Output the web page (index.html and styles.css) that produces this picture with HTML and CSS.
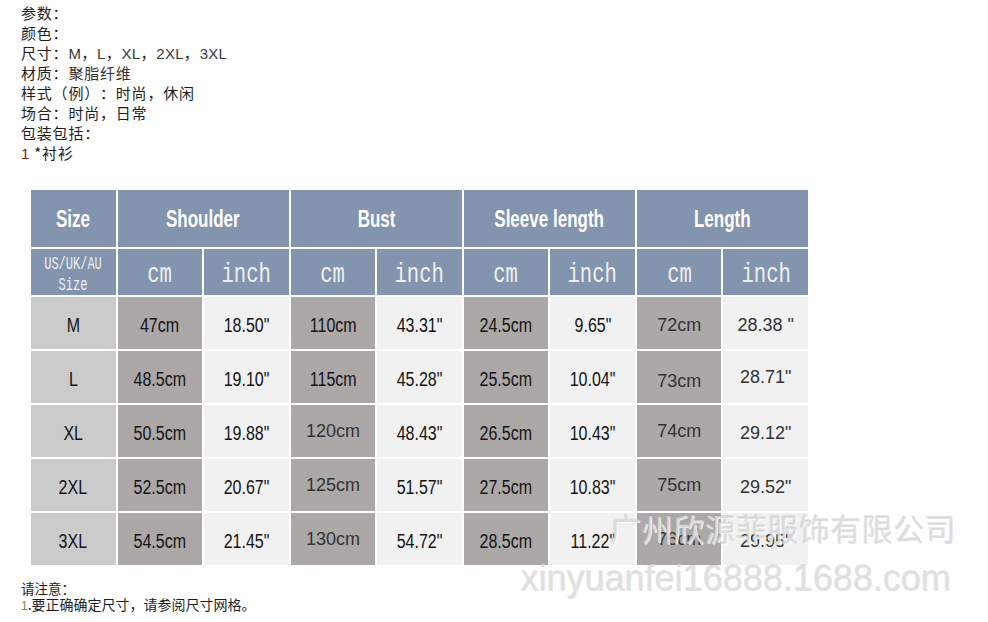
FILE: index.html
```html
<!DOCTYPE html>
<html lang="zh-CN">
<head>
<meta charset="utf-8">
<title>尺码表</title>
<link rel="stylesheet" href="styles.css">
</head>
<body>
<div class="page">
  <div class="params">
    <p>参数：</p>
    <p>颜色：</p>
    <p>尺寸：<span class="latin">M</span>，<span class="latin">L</span>，<span class="latin">XL</span>，<span class="latin">2XL</span>，<span class="latin">3XL</span></p>
    <p>材质：<span class="soft">聚脂纤维</span></p>
    <p>样式（例）：时尚，休闲</p>
    <p>场合：时尚，日常</p>
    <p>包装包括：</p>
    <p><span class="num-red">1</span> *衬衫</p>
  </div>

  <div class="table-wrap">
    <div class="size-table">
      <div class="c h1"><span class="hd">Size</span></div>
      <div class="c h1 span2"><span class="hd">Shoulder</span></div>
      <div class="c h1 span2"><span class="hd">Bust</span></div>
      <div class="c h1 span2"><span class="hd">Sleeve length</span></div>
      <div class="c h1 span2"><span class="hd">Length</span></div>

      <div class="c h2 region"><span class="mono small">US/UK/AU<br>Size</span></div>
      <div class="c h2"><span class="mono">cm</span></div>
      <div class="c h2"><span class="mono">inch</span></div>
      <div class="c h2"><span class="mono">cm</span></div>
      <div class="c h2"><span class="mono">inch</span></div>
      <div class="c h2"><span class="mono">cm</span></div>
      <div class="c h2"><span class="mono">inch</span></div>
      <div class="c h2"><span class="mono">cm</span></div>
      <div class="c h2"><span class="mono">inch</span></div>

      <div class="c sz"><span class="n">M</span></div>
      <div class="c cm"><span class="n">47cm</span></div>
      <div class="c in"><span class="n">18.50"</span></div>
      <div class="c cm"><span class="n">110cm</span></div>
      <div class="c in"><span class="n">43.31"</span></div>
      <div class="c cm"><span class="n">24.5cm</span></div>
      <div class="c in"><span class="n">9.65"</span></div>
      <div class="c cm"><span class="w">72cm</span></div>
      <div class="c in"><span class="w">28.38 "</span></div>

      <div class="c sz"><span class="n">L</span></div>
      <div class="c cm"><span class="n">48.5cm</span></div>
      <div class="c in"><span class="n">19.10"</span></div>
      <div class="c cm"><span class="n">115cm</span></div>
      <div class="c in"><span class="n">45.28"</span></div>
      <div class="c cm"><span class="n">25.5cm</span></div>
      <div class="c in"><span class="n">10.04"</span></div>
      <div class="c cm"><span class="w low">73cm</span></div>
      <div class="c in"><span class="w up">28.71"</span></div>

      <div class="c sz"><span class="n">XL</span></div>
      <div class="c cm"><span class="n">50.5cm</span></div>
      <div class="c in"><span class="n">19.88"</span></div>
      <div class="c cm"><span class="w up">120cm</span></div>
      <div class="c in"><span class="n">48.43"</span></div>
      <div class="c cm"><span class="n">26.5cm</span></div>
      <div class="c in"><span class="n">10.43"</span></div>
      <div class="c cm"><span class="w up">74cm</span></div>
      <div class="c in"><span class="w">29.12"</span></div>

      <div class="c sz"><span class="n">2XL</span></div>
      <div class="c cm"><span class="n">52.5cm</span></div>
      <div class="c in"><span class="n">20.67"</span></div>
      <div class="c cm"><span class="w up">125cm</span></div>
      <div class="c in"><span class="n">51.57"</span></div>
      <div class="c cm"><span class="n">27.5cm</span></div>
      <div class="c in"><span class="n">10.83"</span></div>
      <div class="c cm"><span class="w up">75cm</span></div>
      <div class="c in"><span class="w">29.52"</span></div>

      <div class="c sz"><span class="n">3XL</span></div>
      <div class="c cm"><span class="n">54.5cm</span></div>
      <div class="c in"><span class="n">21.45"</span></div>
      <div class="c cm"><span class="w up">130cm</span></div>
      <div class="c in"><span class="n">54.72"</span></div>
      <div class="c cm"><span class="n">28.5cm</span></div>
      <div class="c in"><span class="n">11.22"</span></div>
      <div class="c cm"><span class="w up">76cm</span></div>
      <div class="c in"><span class="w">29.95"</span></div>
    </div>
    <div class="watermark">
      <div class="wm-cn">广州欣源菲服饰有限公司</div>
      <div class="wm-en">xinyuanfei16888.1688.com</div>
    </div>
  </div>

  <div class="notes">
    <p>请注意：</p>
    <p class="line2"><span class="num-green">1</span>.要正确确定尺寸，请参阅尺寸网格。</p>
  </div>
</div>
</body>
</html>
```

FILE: styles.css
```css
* { box-sizing: border-box; }
html, body {
  margin: 0;
  padding: 0;
  background: #ffffff;
}
body {
  width: 988px;
  height: 622px;
  overflow: hidden;
  font-family: "Noto Sans CJK SC", "Liberation Sans", sans-serif;
  color: #1e1e1e;
  text-spacing-trim: space-all;
}
.page {
  padding: 3px 0 0 21px;
}
.params p {
  margin: 0;
  font-size: 15px;
  letter-spacing: 0.8px;
  line-height: 20px;
  height: 20px;
  white-space: nowrap;
  text-spacing-trim: space-all;
}
.latin {
  font-family: "Liberation Sans", sans-serif;
  font-size: 15px;
  letter-spacing: 0.3px;
  color: #3a3a3a;
}
.soft { color: #333; }
.num-red {
  font-family: "Liberation Sans", sans-serif;
  color: #7a2424;
}

.table-wrap {
  position: relative;
  margin: 27px 0 0 10px;
  width: 777px;
}
.size-table {
  display: grid;
  grid-template-columns: repeat(9, 1fr);
  grid-template-rows: 57px 46px repeat(5, 52px);
  gap: 2px;
  background: #ffffff;
}
.c {
  display: flex;
  align-items: center;
  justify-content: center;
  overflow: hidden;
}
.span2 { grid-column: span 2; }
.h1, .h2 { background: #8294ae; }
.hd {
  display: inline-block;
  font-family: "Liberation Sans", sans-serif;
  font-weight: bold;
  font-size: 23px;
  color: #ffffff;
  transform: scaleX(0.74);
  white-space: nowrap;
  padding-top: 2px;
}
.h2 { padding-top: 4px; }
.mono {
  display: inline-block;
  font-family: "Liberation Mono", monospace;
  font-size: 21px;
  color: #f0f0f0;
  transform: scale(0.98, 1.3);
}
.region { align-items: flex-start; padding-top: 0; }
.mono.small {
  font-size: 12.5px;
  line-height: 14px;
  text-align: center;
  transform: scale(0.96, 1.5);
  transform-origin: top center;
  padding-top: 3px;
}
.sz { background: #cbcbcb; }
.cm { background: #aba8a7; }
.in { background: #f1f1f1; }
.n {
  display: inline-block;
  font-family: "Liberation Sans", sans-serif;
  font-size: 20px;
  color: #141414;
  transform: scaleX(0.8);
  white-space: nowrap;
  padding-top: 4px;
}
.w {
  display: inline-block;
  font-family: "Liberation Sans", sans-serif;
  font-size: 18px;
  color: #333333;
  white-space: nowrap;
  padding-top: 4px;
}
.w.up { padding-top: 0; }
.w.low { padding-top: 8px; }

.watermark {
  position: absolute;
  left: 0;
  top: 0;
  width: 100%;
  pointer-events: none;
}
.wm-cn {
  position: absolute;
  left: 579px;
  top: 318px;
  font-family: "Noto Sans CJK SC", sans-serif;
  font-size: 31px;
  line-height: 40px;
  letter-spacing: 0.5px;
  color: rgba(215, 215, 215, 0.78);
  text-shadow: 1px 1px 0 rgba(255, 255, 255, 0.8), -1px -1px 0 rgba(160, 160, 160, 0.25);
  white-space: nowrap;
}
.wm-en {
  position: absolute;
  left: 490px;
  top: 367px;
  font-family: "Liberation Sans", sans-serif;
  font-size: 36px;
  line-height: 44px;
  color: rgba(220, 220, 220, 0.85);
  text-shadow: 1px 1px 0 rgba(255, 255, 255, 0.8), -1px -1px 0 rgba(150, 150, 150, 0.22);
  white-space: nowrap;
}

.notes {
  margin-top: 15px;
}
.notes p {
  margin: 0;
  font-size: 13.5px;
  line-height: 16px;
  white-space: nowrap;
}
.notes .line2 { font-size: 14px; }
.num-green {
  font-family: "Liberation Sans", sans-serif;
  font-size: 12px;
  color: #7b8a3e;
}
```
